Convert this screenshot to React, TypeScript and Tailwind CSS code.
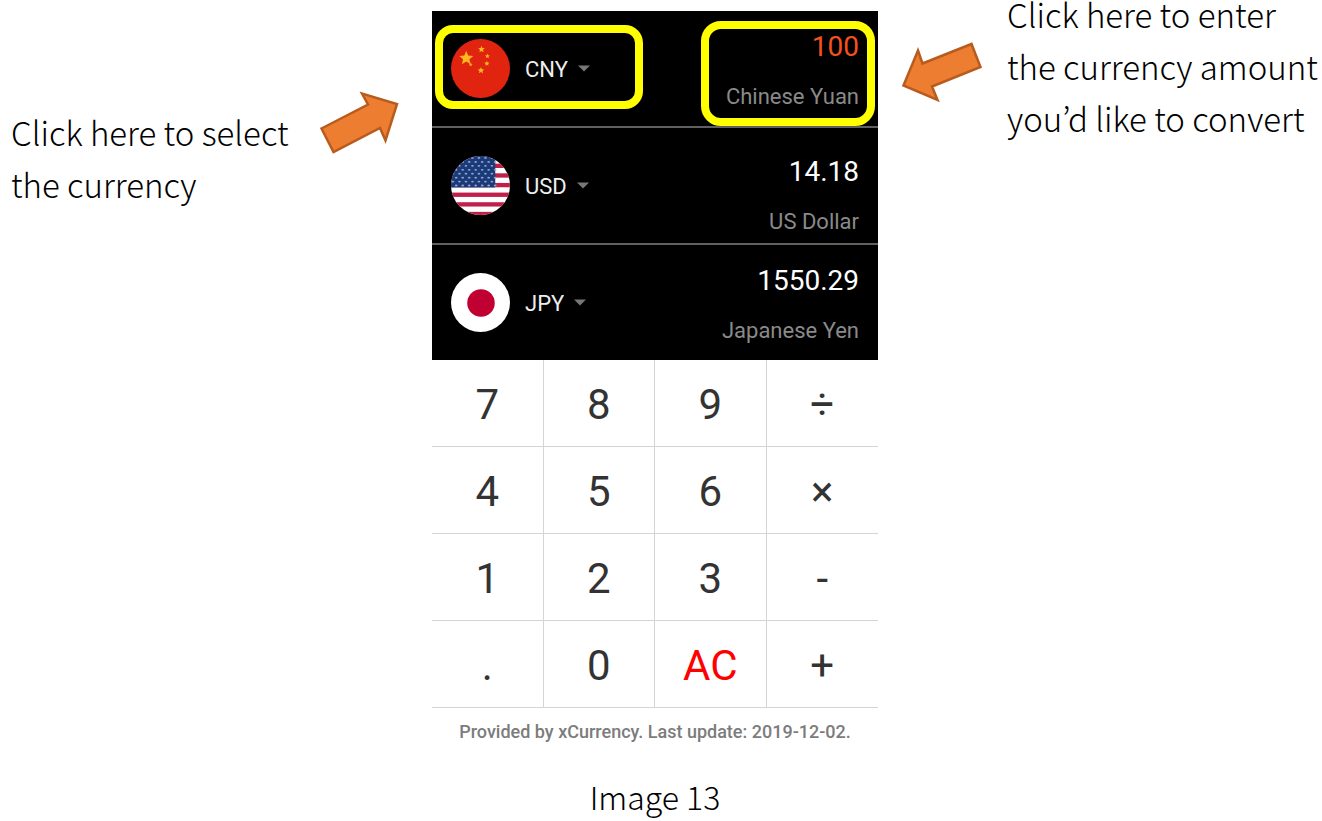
import { useState } from 'react';
import { clsx } from 'clsx';

type Code = 'CNY' | 'USD' | 'JPY';

interface Row {
    code: Code;
    amount: string;
    highlighted?: boolean;
    padding: string;
}

const NAMES: Record<Code, string> = {
    CNY: 'Chinese Yuan',
    USD: 'US Dollar',
    JPY: 'Japanese Yen',
};

const ROWS: Row[] = [
    { code: 'CNY', amount: '100', highlighted: true, padding: 'pt-5' },
    { code: 'USD', amount: '14.18', padding: 'pt-7' },
    { code: 'JPY', amount: '1550.29', padding: 'pt-5' },
];

const KEYS = ['7', '8', '9', '÷', '4', '5', '6', '×', '1', '2', '3', '-', '.', '0', 'AC', '+'];

function star(cx: number, cy: number, r: number) {
    return Array.from({ length: 10 }, (_, i) => {
        const radius = i % 2 === 0 ? r : r * 0.45;
        const angle = (Math.PI / 5) * i - Math.PI / 2;
        return `${(cx + radius * Math.cos(angle)).toFixed(2)},${(cy + radius * Math.sin(angle)).toFixed(2)}`;
    }).join(' ');
}

function Flag({ code }: { code: Code }) {
    return (
        <svg viewBox="0 0 60 60" className="size-[59px] shrink-0" aria-hidden="true">
            <clipPath id={`flag-${code}`}>
                <circle cx="30" cy="30" r="30" />
            </clipPath>
            <g clipPath={`url(#flag-${code})`}>
                {code === 'CNY' && (
                    <>
                        <rect width="60" height="60" fill="#e02410" />
                        <g fill="#fcb81c">
                            <polygon points={star(15.5, 19.5, 7.5)} />
                            <polygon points={star(31, 10.5, 3.6)} />
                            <polygon points={star(37, 17.5, 2.6)} />
                            <polygon points={star(36.5, 25, 2.8)} />
                            <polygon points={star(30.5, 32, 3.6)} />
                            <polygon points={star(20, 26, 2)} />
                        </g>
                    </>
                )}
                {code === 'USD' && (
                    <>
                        <rect width="60" height="60" fill="#ffffff" />
                        {[0, 1, 2, 3, 4, 5, 6].map(i => (
                            <rect key={i} y={-2 + i * 9.8} width="60" height="4.4" fill="#c01f4a" />
                        ))}
                        <rect width="45" height="32" fill="#1b3a78" />
                        {[0, 1, 2, 3, 4, 5, 6, 7].map(r =>
                            [0, 1, 2, 3, 4, 5, 6].map(c => (
                                <ellipse
                                    key={`${r}-${c}`}
                                    cx={2 + c * 6.6 + (r % 2) * 3.3}
                                    cy={2 + r * 4}
                                    rx="1.4"
                                    ry="0.9"
                                    fill="#8fa6d2"
                                />
                            ))
                        )}
                    </>
                )}
                {code === 'JPY' && (
                    <>
                        <rect width="60" height="60" fill="#ffffff" />
                        <circle cx="30.5" cy="30.5" r="14" fill="#bf0030" />
                    </>
                )}
            </g>
        </svg>
    );
}

function CurrencyRow({ row, last }: { row: Row; last: boolean }) {
    const [code, setCode] = useState<Code>(row.code);
    const [amount, setAmount] = useState(row.amount);

    return (
        <div className={clsx('relative flex justify-between px-[19px]', last ? 'h-[115px]' : 'h-[117px] border-b-2 border-[#606060]')}>
            <label className="flex items-center">
                <Flag code={code} />
                <select
                    aria-label="Currency"
                    value={code}
                    onChange={e => setCode(e.target.value as Code)}
                    className="ml-[15px] field-sizing-content appearance-none bg-black pt-0.5 text-[22px] leading-7 text-[#eeeeee] outline-none"
                >
                    {Object.keys(NAMES).map(c => (
                        <option key={c}>{c}</option>
                    ))}
                </select>
                <svg viewBox="0 0 12 7" className="ml-2.5 h-[7px] w-3" aria-hidden="true">
                    <path d="M0 0.5H12L6 6.5Z" fill="#777777" />
                </svg>
            </label>
            <label className={clsx('flex flex-col items-end gap-5', row.padding)}>
                <input
                    type="text"
                    inputMode="decimal"
                    aria-label={`Amount in ${NAMES[code]}`}
                    value={amount}
                    readOnly={!row.highlighted}
                    onChange={e => setAmount(e.target.value)}
                    className={clsx(
                        'h-8 w-36 bg-transparent text-right text-[28px] leading-8 outline-none',
                        row.highlighted ? 'text-[#f4511e]' : 'text-white'
                    )}
                />
                <span className="text-[22px] leading-7 text-[#8a8a8a]">{NAMES[code]}</span>
            </label>
            {row.highlighted && (
                <>
                    <span className="pointer-events-none absolute top-[14px] left-[3px] h-[84px] w-[208px] rounded-[18px] border-8 border-[#ffff00]" />
                    <span className="pointer-events-none absolute top-[10px] right-[3px] h-[105px] w-[174px] rounded-[20px] border-8 border-[#ffff00]" />
                </>
            )}
        </div>
    );
}

function Keypad() {
    return (
        <div className="grid grid-cols-4">
            {KEYS.map((key, i) => (
                <button
                    key={key}
                    type="button"
                    className={clsx(
                        'h-[87px] border-b border-[#d4d4d4] pt-1 text-[42px] leading-none',
                        i % 4 !== 3 && 'border-r',
                        key === 'AC' ? 'text-[#ff0000]' : 'text-[#333333]'
                    )}
                >
                    {key}
                </button>
            ))}
        </div>
    );
}

export default function App() {
    return (
        <main className="grid min-h-screen grid-cols-[minmax(0,432fr)_minmax(0,446fr)_minmax(0,444fr)] items-start bg-white text-black">
            <section className="flex items-start justify-between pt-[91px] pr-[33px] pl-[11px]">
                <p className="pt-[15px] font-['Noto_Sans_CJK_KR',sans-serif] text-[33px] leading-[52px] font-light whitespace-nowrap">
                    Click here to select
                    <br />
                    the currency
                </p>
                <svg viewBox="320 91 79 63" className="h-[63px] w-[79px] shrink-0" aria-hidden="true">
                    <path
                        d="M321.5 128.5L368 104.5L362 93.5L397 104L385.500 140.500L380 128L333.500 152Z"
                        fill="#ed7d31"
                        stroke="#b85c1e"
                        strokeWidth="2.500"
                    />
                </svg>
            </section>

            <figure className="pt-[11px] font-[Roboto,sans-serif]">
                <div className="bg-black">
                    {ROWS.map((row, i) => (
                        <CurrencyRow key={row.code} row={row} last={i === ROWS.length - 1} />
                    ))}
                </div>
                <Keypad />
                <p className="pt-3 text-center text-[18px] leading-6 font-medium text-[#7c7c7c]">
                    Provided by xCurrency. Last update: 2019-12-02.
                </p>
                <figcaption className="pt-[30px] text-center font-['Noto_Sans_CJK_KR',sans-serif] text-[32px] leading-[44px] font-light">
                    Image 13
                </figcaption>
            </figure>

            <section className="flex items-start gap-[25px] pl-6">
                <svg viewBox="902 41 80 62" className="mt-[41px] h-[62px] w-20 shrink-0" aria-hidden="true">
                    <path
                        d="M903.500 85.500L918 50.500L922.500 63.500L971.500 44L980.500 67L932 86.500L937.500 100Z"
                        fill="#ed7d31"
                        stroke="#b85c1e"
                        strokeWidth="2.500"
                    />
                </svg>
                <p className="-mt-3 font-['Noto_Sans_CJK_KR',sans-serif] text-[33px] leading-[52px] font-light whitespace-nowrap">
                    Click here to enter
                    <br />
                    the currency amount
                    <br />
                    you’d like to convert
                </p>
            </section>
        </main>
    );
}
